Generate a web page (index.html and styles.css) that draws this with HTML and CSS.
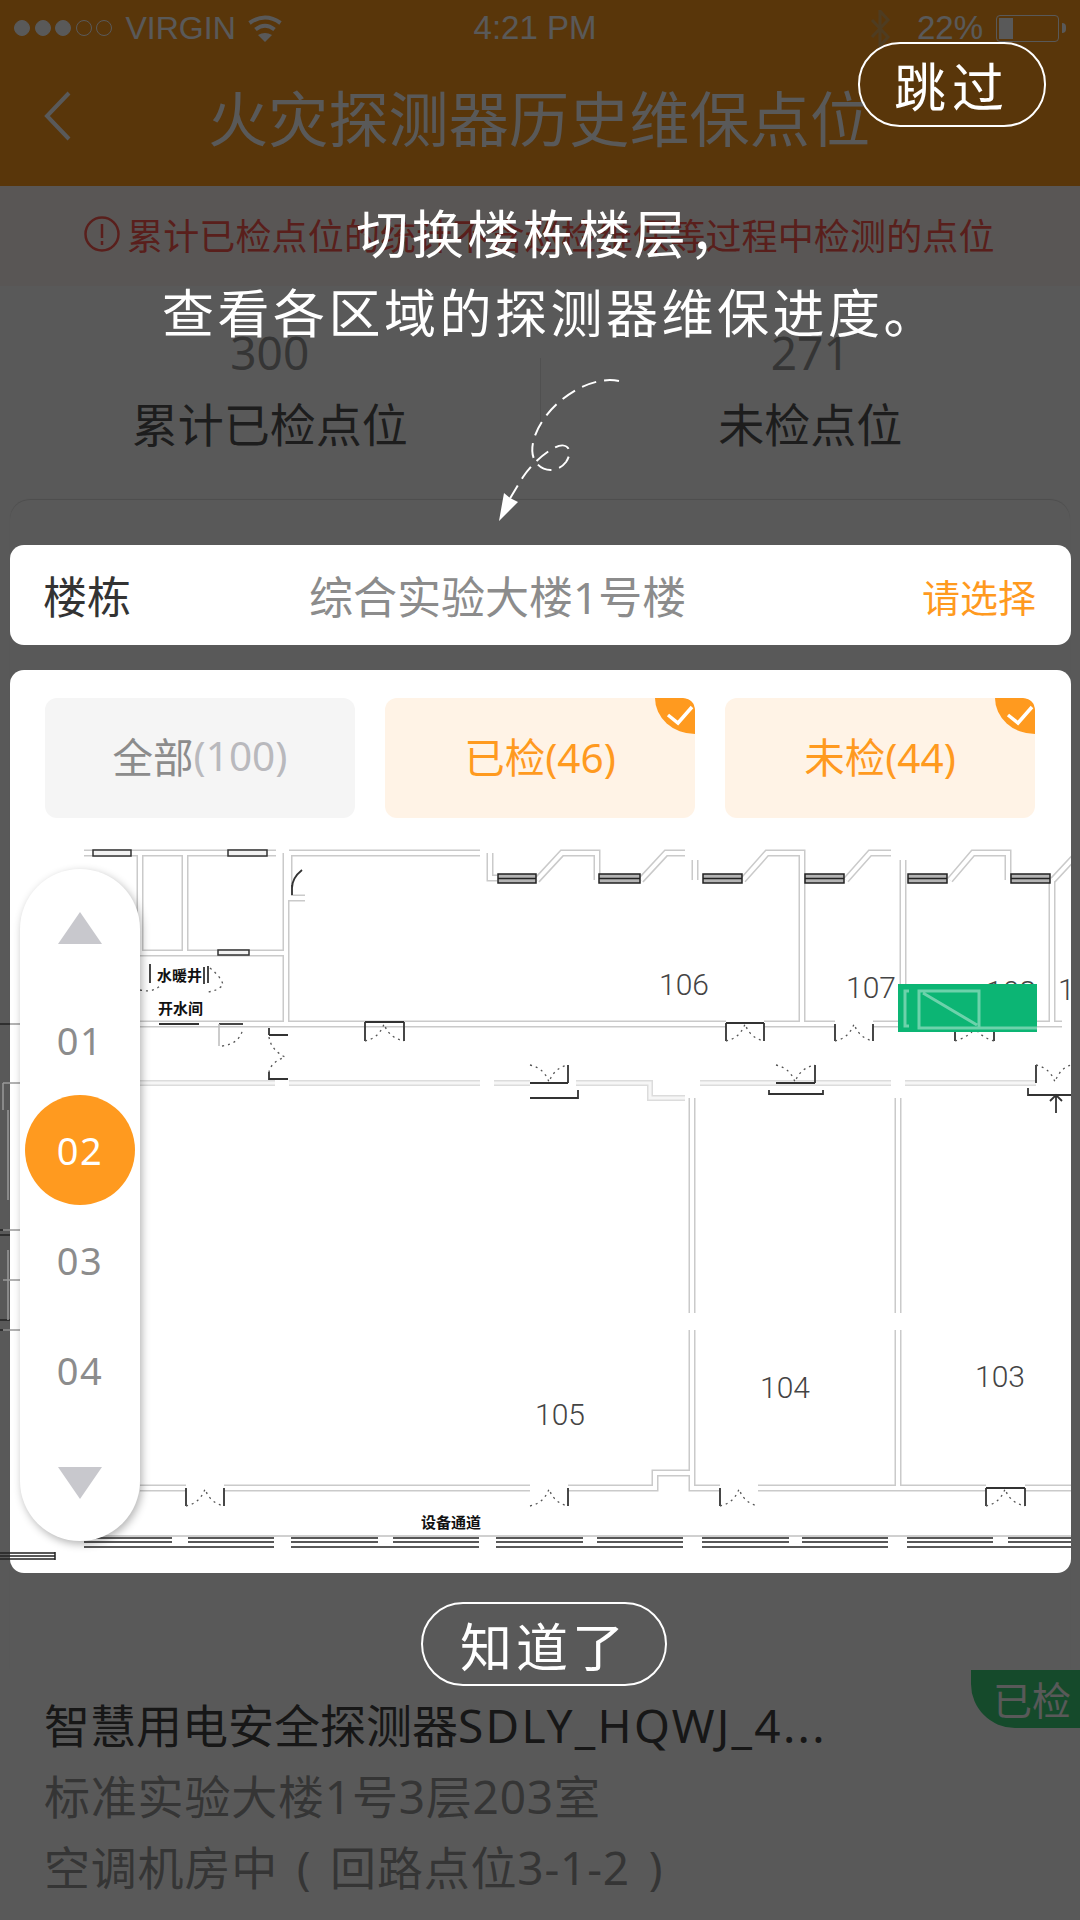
FILE: index.html
```html
<!DOCTYPE html>
<html lang="zh-CN">
<head>
<meta charset="utf-8">
<title>火灾探测器历史维保点位</title>
<link rel="stylesheet" href="styles.css">
</head>
<body>
<main class="page">
  <div class="statusbar">
    <div class="status-left">
      <span class="dot"></span><span class="dot"></span><span class="dot"></span><span class="dot hollow"></span><span class="dot hollow"></span>
      <span class="carrier">VIRGIN</span>
      <svg class="wifi" viewBox="0 0 34 27"><path class="wifi-arc" d="M1.500 8Q17 -3 32.500 8M7.500 14.500Q17 7 26.500 14.500"/><path d="M10 20Q17 16 24 20L17 27z"/></svg>
    </div>
    <span class="clock">4:21 PM</span>
    <div class="status-right">
      <svg class="bt" viewBox="0 0 22 37"><path d="M3 10L19 27L11 36V1L19 10L3 27"/></svg>
      <span class="pct">22%</span>
      <span class="battery"><span class="battery-fill"></span></span>
      <span class="battery-nub"></span>
    </div>
  </div>
  <header class="navbar">
    <svg class="back" viewBox="0 0 28 50"><path d="M25 2L3 25l22 23"/></svg>
    <h1 class="title">火灾探测器历史维保点位</h1>
  </header>
  <div class="notice">
    <svg class="notice-icon" viewBox="0 0 36 36"><circle cx="18" cy="18" r="16.500"/><path d="M18 8v14M18 25v4"/></svg>
    <span>累计已检点位的统计不含巡检维保等过程中检测的点位</span>
  </div>
  <section class="stats">
    <div class="stat"><div class="stat-value">300</div><div class="stat-label">累计已检点位</div></div>
    <div class="stat-divider"></div>
    <div class="stat"><div class="stat-value">271</div><div class="stat-label">未检点位</div></div>
  </section>
  <section class="panel">
    <div class="panel-body"></div>
    <article class="item">
      <span class="item-tag">已检</span>
      <div class="item-name">智慧用电安全探测器<span class="item-code">SDLY_HQWJ_4...</span></div>
      <div class="item-meta">标准实验大楼1号3层203室</div>
      <div class="item-meta">空调机房中 ( 回路点位3-1-2 )</div>
    </article>
  </section>
</main>

<div class="overlay">
  <button class="skip">跳过</button>
  <p class="hint">切换楼栋楼层，<br>查看各区域的探测器维保进度。</p>
  <svg class="arrow" viewBox="440 370 200 160">
    <path class="arrow-line" d="M618 381C598 377 575 387 557 403C537 421 527 445 533 459C539 472 556 474 565 462C573 450 566 441 553 448C540 455 528 468 522 477L508 500"/>
    <path class="arrow-head" d="M498 521L503 493L509 498L517 502z"/>
  </svg>

  <div class="building card">
    <span class="building-label">楼栋</span>
    <span class="building-name">综合实验大楼1号楼</span>
    <span class="building-action">请选择</span>
  </div>

  <div class="map-card card">
    <div class="chips">
      <div class="chip">全部<span class="chip-count">(100)</span></div>
      <div class="chip on">已检(46)
        <svg class="chip-check" viewBox="0 0 40 36"><path class="check-bg" d="M0 0H28Q40 0 40 12V36A40 36 0 0 1 0 0z"/><path class="check-mark" d="M13 17L23 25L37 9"/></svg>
      </div>
      <div class="chip on">未检(44)
        <svg class="chip-check" viewBox="0 0 40 36"><path class="check-bg" d="M0 0H28Q40 0 40 12V36A40 36 0 0 1 0 0z"/><path class="check-mark" d="M13 17L23 25L37 9"/></svg>
      </div>
    </div>

    <svg class="plan" viewBox="0 820 1071 753">
      <defs>
        <g id="walls">
          <path d="M84 853H276M140 853V953H286M185 853V953M286 853V1023"/>
          <path d="M289 853H480M490 853V878H497M289 853V898H305"/>
          <path d="M537 880L562 853H597V880M641 880L666 853H685M695 860V880M743 880L767 853H802V1023M846 880L870 853H891M903 860V1023M950 880L973 853H1008V880M1053 880L1080 851M1052 880V1023"/>
          <path d="M20 1024H210M210 1024H726M764 1024H835M873 1024H898M1037 1024H1062"/>
          <path d="M692 1098V1313M692 1330V1473H655V1488H568M692 1473V1488H720M898 1098V1313M898 1330V1488M758 1488H986M1025 1488H1071M140 1488H186M224 1488H530"/>
        </g>
        <g id="corridor">
          <path d="M140 1083H275M289 1083H480M494 1083H530M576 1083H650V1098H685M700 1083H891M905 1083H1036"/>
        </g>
      </defs>
      <use href="#walls" class="wall-outer"/>
      <use href="#walls" class="wall-inner"/>
      <use href="#corridor" class="corridor-outer"/>
      <use href="#corridor" class="corridor-inner"/>

      <path class="pane-light" d="M93 850h38v6h-38zM228 850h39v6h-39zM218 950h31v5h-31z"/>
      <g class="pane">
        <path d="M498 874h38v9h-38zM599 874h41v9h-41zM703 874h39v9h-39zM805 874h39v9h-39zM908 874h39v9h-39zM1011 874h39v9h-39z"/>
        <path d="M498 878.500h38M599 878.500h41M703 878.500h39M805 878.500h39M908 878.500h39M1011 878.500h39"/>
      </g>

      <path class="sill-top" d="M84 1536H1071"/>
      <g class="sill">
        <path d="M84 1538H172M188 1538H274M291 1538H378M393 1538H479M496 1538H583M597 1538H683M702 1538H789M802 1538H888M907 1538H993M1008 1538H1071"/>
        <path d="M84 1542H172M188 1542H274M291 1542H378M393 1542H479M496 1542H583M597 1542H683M702 1542H789M802 1542H888M907 1542H993M1008 1542H1071"/>
        <path d="M84 1547H274M291 1547H479M496 1547H683M702 1547H888M907 1547H1071"/>
        <path d="M10 1553H55M10 1556H55M10 1559H55M55 1552V1560"/>
      </g>

      <g class="door">
        <path class="jamb" d="M726 1023H764M726 1023V1041M764 1023V1041"/><path class="swing" d="M726 1041Q740 1038 745 1024Q750 1038 764 1041"/>
        <path class="jamb" d="M835 1024V1041M873 1024V1041"/><path class="swing" d="M835 1041Q849 1038 854 1024Q859 1038 873 1041"/>
        <path class="jamb" d="M955 1041V1032M994 1041V1032"/><path class="swing" d="M955 1041Q965 1038 972 1032M994 1041Q984 1038 978 1032"/>
        <path class="jamb" d="M365 1022H404M365 1022V1041M404 1022V1041"/><path class="swing" d="M365 1041Q379 1038 384 1024Q389 1038 404 1041"/>
        <path class="jamb" d="M219 1024H243"/><path class="jamb-light" d="M219 1024V1046"/><path class="swing" d="M222 1046Q240 1044 243 1028"/>
        <path class="jamb" d="M269 1035H288M269 1035V1028M269 1072V1079H288"/><path class="swing" d="M269 1037Q271 1050 285 1057Q271 1062 269 1072"/>
        <path class="jamb" d="M530 1083H568M568 1065V1083M530 1098H578V1090"/><path class="swing" d="M530 1065Q544 1068 549 1082Q554 1068 568 1065"/>
        <path class="jamb" d="M776 1083H815M815 1065V1083M769 1090V1094H823V1090"/><path class="swing" d="M776 1065Q790 1068 795 1082Q800 1068 815 1065"/>
        <path class="jamb" d="M1036 1065V1083M1028 1088V1095H1071M1056 1095V1113M1050 1101L1056 1095L1062 1101"/><path class="swing" d="M1036 1065Q1050 1068 1055 1082Q1060 1068 1071 1065"/>
        <path class="jamb" d="M186 1488V1506M224 1488V1506"/><path class="swing" d="M186 1506Q200 1503 205 1489Q210 1503 224 1506"/>
        <path class="jamb" d="M568 1488V1506"/><path class="swing" d="M530 1506Q544 1503 549 1489Q554 1503 568 1506"/>
        <path class="jamb" d="M720 1488V1506"/><path class="swing" d="M720 1506Q734 1503 739 1489Q744 1503 758 1506"/>
        <path class="jamb" d="M986 1488H1025M986 1488V1506M1025 1488V1506"/><path class="swing" d="M986 1506Q1000 1503 1005 1489Q1010 1503 1025 1506"/>
        <path class="jamb" d="M150 964V983M204 967V984M208 966V983M159 1024H199"/><path class="swing" d="M140 990Q152 993 160 986M210 968Q222 978 223 985Q216 992 205 992"/>
        <path class="jamb" d="M302 870Q292 878 292 888M292 895V885"/>
      </g>

      <text class="room" x="659" y="995">106</text>
      <text class="room" x="846" y="998">107</text>
      <text class="room" x="986" y="1002">108</text>
      <text class="room" x="1058" y="1000">10</text>
      <text class="room" x="535" y="1425">105</text>
      <text class="room" x="760" y="1398">104</text>
      <text class="room" x="975" y="1387">103</text>
      <text class="room-cn" x="157" y="981">水暖井</text>
      <text class="room-cn" x="158" y="1014">开水间</text>
      <text class="room-cn" x="421" y="1528">设备通道</text>

      <rect class="marker" x="898" y="984" width="139" height="48"/>
      <path class="marker-lines" d="M919 991H979V1028H919zM923 993L977 1025M979 1028H1037M909 991H905V1026H909M979 991V1028"/>

      <path class="outside" d="M0 1024H10M0 1553H10M0 1556H10M0 1559H10M0 1230H10M0 1235H10M0 1320H10M0 1330H10"/>
      <path class="edge" d="M10 1024H20M3 1083H20M3 1083V1110M8 1110V1200M3 1230H20M3 1280H20M3 1330H20M8 1250V1320"/>
    </svg>

    <nav class="floors">
      <svg class="floor-arrow up" viewBox="0 0 44 32"><path d="M22 0L44 32H0z"/></svg>
      <div class="floor">01</div>
      <div class="floor active">02</div>
      <div class="floor">03</div>
      <div class="floor">04</div>
      <svg class="floor-arrow down" viewBox="0 0 44 32"><path d="M0 0H44L22 32z"/></svg>
    </nav>
  </div>

  <button class="got-it">知道了</button>
</div>
</body>
</html>
```
FILE: styles.css
```css
* { box-sizing: border-box; }
html, body { margin: 0; padding: 0; width: 1080px; height: 1920px; overflow: hidden; background: #fff; }
body { position: relative; font-family: "Noto Sans", "Noto Sans CJK SC", sans-serif; color: #333; }

.page { width: 1080px; height: 1920px; display: flex; flex-direction: column; }

.statusbar { background: #ff9a1f; height: 56px; display: flex; align-items: center; justify-content: space-between; color: #fff; font-family: "Liberation Sans", sans-serif; font-size: 33px; padding: 0 14px; }
.status-left { width: 360px; display: flex; align-items: center; gap: 4.500px; }
.dot { width: 16px; height: 16px; border-radius: 50%; background: #fff; border: 1px solid #fff; flex: none; }
.dot.hollow { background: none; }
.carrier { margin-left: 9px; font-size: 32px; }
.wifi { width: 34px; height: 27px; margin-left: 8px; fill: #fff; flex: none; }
.wifi-arc { fill: none; stroke: #fff; stroke-width: 4; }
.clock { width: 360px; text-align: center; margin-left: -10px; }
.status-right { width: 360px; display: flex; align-items: center; justify-content: flex-end; }
.bt { width: 22px; height: 37px; fill: none; stroke: #e0ab60; stroke-width: 3; margin-right: 26px; }
.pct { margin-right: 13px; }
.battery { width: 63px; height: 27px; border: 1.500px solid #fff; border-radius: 4px; padding: 2px; display: block; }
.battery-fill { display: block; width: 14px; height: 100%; background: #fff; }
.battery-nub { width: 4px; height: 10px; margin-left: 3px; background: #fff; border-radius: 0 5px 5px 0; }

.navbar { background: #ff9a1f; height: 130px; display: flex; align-items: center; padding: 0 0 10px 44px; }
.back { width: 28px; height: 50px; fill: none; stroke: #fff; stroke-width: 4; }
.title { margin: 0 0 0 136px; font-size: 60px; line-height: 1; letter-spacing: .2px; font-weight: 400; color: #fff; white-space: nowrap; font-family: "Noto Sans CJK SC", sans-serif; }

.notice { height: 100px; background: #fff7f3; display: flex; align-items: center; padding: 0 0 4px 84px; gap: 7px; color: #ff5a50; font-size: 36px; letter-spacing: .15px; white-space: nowrap; font-family: "Noto Sans CJK SC", sans-serif; }
.notice-icon { width: 36px; height: 36px; fill: none; stroke: #ff5a50; stroke-width: 2.500; flex: none; }

.stats { height: 214px; display: flex; padding-top: 39px; }
.stat { width: 539.500px; text-align: center; }
.stat-value { font-size: 46px; line-height: 54px; color: #999; }
.stat-label { margin-top: 12px; font-size: 46px; line-height: 62px; color: #555; font-family: "Noto Sans CJK SC", sans-serif; }
.stat-divider { width: 1px; height: 72px; margin-top: 33px; background: #e6e6e6; }

.panel { flex: 1; display: flex; flex-direction: column; }
.panel-body { height: 1170px; margin: 0 10px; border-radius: 20px 20px 0 0; box-shadow: 0 -1px 1px #ddd; }
.item { position: relative; flex: 1; padding: 19px 44px 0; background: #fff; }
.item-tag { position: absolute; top: 0; right: 0; width: 109px; height: 58px; background: #3cd37b; color: #fff; border-radius: 0 0 0 44px; font-size: 39px; line-height: 56px; padding-left: 22px; font-family: "Noto Sans CJK SC", sans-serif; }
.item-name { font-size: 46px; line-height: 72px; color: #444; white-space: nowrap; }
.item-code { letter-spacing: 2.300px; }
.item-meta { font-size: 46px; line-height: 71px; letter-spacing: .8px; color: #999; white-space: nowrap; word-spacing: 6px; }

.overlay { position: absolute; inset: 0; background: rgba(0, 0, 0, .65); display: flex; flex-direction: column; align-items: flex-start; padding: 192px 9px 0 10px; font-family: "Noto Sans", "Noto Sans CJK SC", sans-serif; }
.skip, .got-it { background: none; border: 2px solid #fff; color: #fff; font-family: "Noto Sans CJK SC", sans-serif; font-size: 52px; font-weight: 400; padding: 0; }
.skip { position: absolute; left: 858px; top: 42px; width: 188px; height: 85px; border-radius: 42px; letter-spacing: 6px; }
.hint { margin: 0; width: 100%; padding-left: 20px; text-align: center; color: #fff; font-family: "Noto Sans CJK SC", sans-serif; font-size: 52px; line-height: 79px; letter-spacing: 3.500px; font-weight: 400; }
.arrow { display: block; align-self: center; width: 200px; height: 160px; margin: 20px 0 15px; }
.arrow-line { fill: none; stroke: #fff; stroke-width: 2; stroke-dasharray: 15 8; }
.arrow-head { fill: #fff; }

.card { background: #fff; width: 1061px; border-radius: 14px; }
.building { height: 100px; display: flex; align-items: center; padding: 0 35px 0 33px; font-size: 44px; color: #333; }
.building-label { width: 266px; }
.building-name { width: 590px; color: #8c8c8c; white-space: nowrap; }
.building-action { color: #ff9a1f; font-size: 38px; white-space: nowrap; margin-left: auto; }

.map-card { position: relative; height: 903px; margin-top: 25px; padding-top: 28px; }
.chips { display: flex; gap: 30px; padding-left: 35px; }
.chip { position: relative; width: 310px; height: 120px; padding-bottom: 5px; background: #f5f5f5; border-radius: 12px; display: flex; align-items: center; justify-content: center; font-size: 40.500px; color: #8c8c8c; white-space: nowrap; overflow: hidden; }
.chip-count { color: #b9b9bd; }
.chip.on { background: #fff3e6; color: #ff9a1f; }
.chip-check { position: absolute; top: 0; right: 0; width: 40px; height: 36px; }
.check-bg { fill: #ff9a1f; }
.check-mark { fill: none; stroke: #fff; stroke-width: 3.500; }

.plan { display: block; width: 1071px; height: 753px; margin: 2px 0 0 -10px; }
.wall-outer { fill: none; stroke: #cacaca; stroke-width: 7; }
.wall-inner { fill: none; stroke: #fff; stroke-width: 4; }
.corridor-outer { fill: none; stroke: #dcdcdc; stroke-width: 6; }
.corridor-inner { fill: none; stroke: #f6f6f6; stroke-width: 3; }
.pane { fill: #b4b4b4; stroke: #222; stroke-width: 1.500; }
.pane-light { fill: #f2f2f2; stroke: #333; stroke-width: 1.500; }
.sill-top { fill: none; stroke: #d0d0d0; stroke-width: 2; }
.sill { fill: none; stroke: #222; stroke-width: 1.500; }
.jamb { fill: none; stroke: #333; stroke-width: 1.800; }
.jamb-light { fill: none; stroke: #bbb; stroke-width: 1.500; }
.swing { fill: none; stroke: #555; stroke-width: 1.300; stroke-dasharray: 2 4; }
.room { font-family: Roboto, sans-serif; font-weight: 300; font-size: 30px; fill: #444; }
.room-cn { font-family: "Noto Sans CJK SC", sans-serif; font-size: 15px; font-weight: 700; fill: #111; }
.marker { fill: #0cb574; }
.marker-lines { fill: none; stroke: rgba(255, 255, 255, .4); stroke-width: 3; }
.outside { fill: none; stroke: #222; stroke-width: 1.500; }
.edge { fill: none; stroke: #999; stroke-width: 1.500; }

.floors { position: absolute; left: 10px; top: 199px; width: 120px; height: 672px; border-radius: 60px; background: #fff; box-shadow: 2px 3px 8px rgba(0, 0, 0, .3); display: flex; flex-direction: column; align-items: center; padding-top: 43px; }
.floor-arrow { width: 44px; height: 32px; fill: #c8c8cd; flex: none; }
.floor-arrow.up { margin-bottom: 41px; }
.floor-arrow.down { margin-top: 42px; }
.floor { width: 110px; height: 110px; flex: none; display: flex; align-items: center; justify-content: center; font-size: 38px; letter-spacing: 1.500px; color: #8c8c8c; border-radius: 50%; }
.floor.active { background: #ff9a1f; color: #fff; }

.got-it { width: 246px; height: 84px; margin: 29px 0 0 411px; border-radius: 42px; letter-spacing: 4px; }
```
